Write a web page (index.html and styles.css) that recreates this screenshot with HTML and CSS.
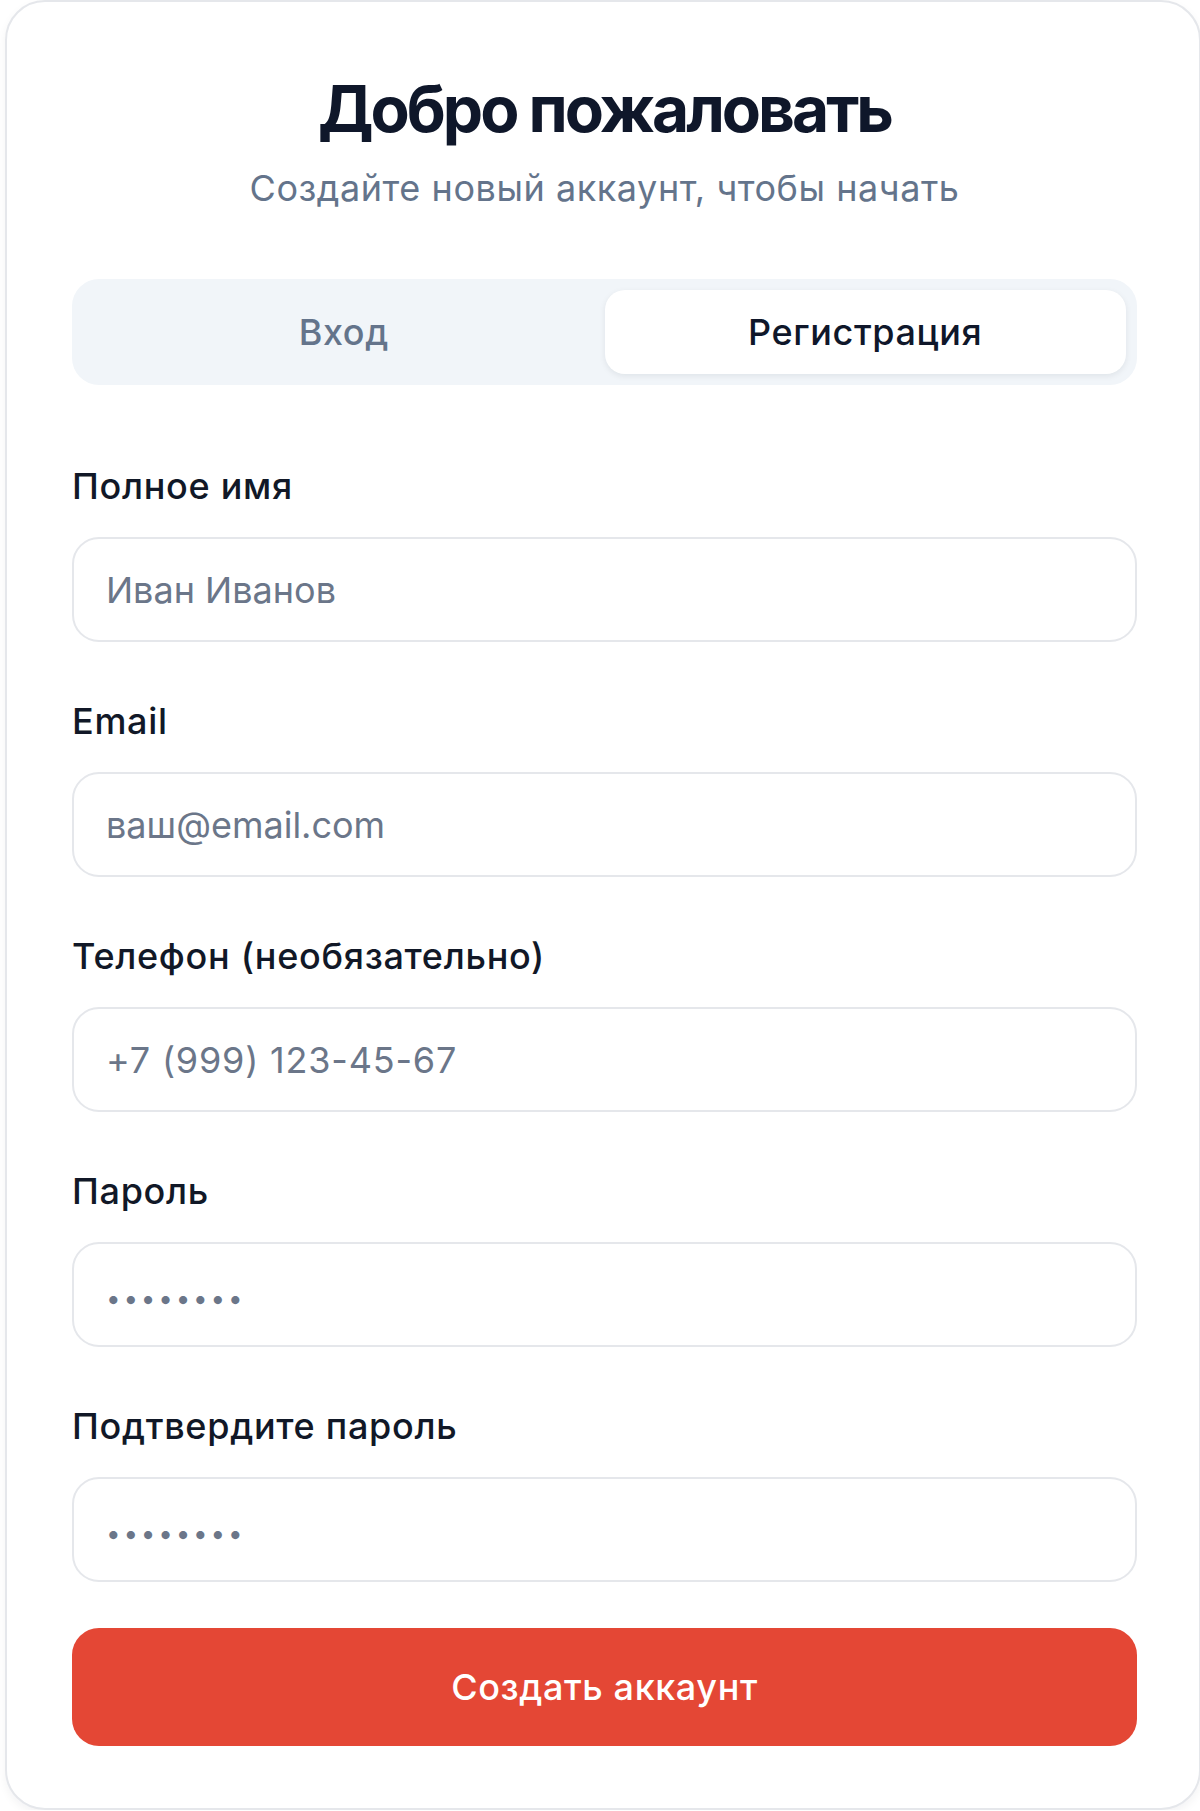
FILE: index.html
```html
<!DOCTYPE html>
<html lang="ru">
<head>
<meta charset="utf-8">
<title>Регистрация</title>
<link rel="stylesheet" href="styles.css">
</head>
<body>
<div class="card">
  <h1 class="title">Добро пожаловать</h1>
  <p class="subtitle">Создайте новый аккаунт, чтобы начать</p>
  <div class="tabs">
    <button class="tab" type="button">Вход</button>
    <button class="tab active" type="button">Регистрация</button>
  </div>
  <form class="form">
    <div class="fields">
      <div class="field">
        <label class="label">Полное имя</label>
        <input class="input" type="text" placeholder="Иван Иванов">
      </div>
      <div class="field">
        <label class="label">Email</label>
        <input class="input" type="email" placeholder="ваш@email.com">
      </div>
      <div class="field">
        <label class="label">Телефон (необязательно)</label>
        <input class="input tel" type="tel" placeholder="+7 (999) 123-45-67">
      </div>
      <div class="field">
        <label class="label">Пароль</label>
        <input class="input pw" type="password" placeholder="••••••••">
      </div>
      <div class="field">
        <label class="label">Подтвердите пароль</label>
        <input class="input pw" type="password" placeholder="••••••••">
      </div>
    </div>
    <button class="submit" type="button">Создать аккаунт</button>
  </form>
</div>
</body>
</html>
```

FILE: styles.css
```css
html, body {
  margin: 0;
  padding: 0;
  background: #ffffff;
}

body {
  font-family: Inter, "Noto Sans", sans-serif;
  color: #0f172a;
}

.card {
  box-sizing: border-box;
  width: 1196px;
  margin-left: 5px;
  border: 2px solid #e5e7eb;
  border-radius: 40px;
  padding: 69px 62px 62px 65px;
  background: #ffffff;
  box-shadow: 0 4px 10px rgba(15, 23, 42, 0.05);
}

.title {
  margin: 0;
  font-size: 64px;
  font-weight: 700;
  line-height: 76px;
  letter-spacing: -3px;
  text-align: center;
  color: #0f172a;
}

.subtitle {
  margin: 14px 0 0;
  font-size: 36px;
  line-height: 54px;
  letter-spacing: 0.55px;
  text-align: center;
  color: #64748b;
}

.tabs {
  margin-top: 64px;
  display: grid;
  grid-template-columns: 1fr 1fr;
  padding: 11px;
  background: #f1f5f9;
  border-radius: 27px;
}

.tab {
  height: 84px;
  border: 0;
  border-radius: 20px;
  background: transparent;
  font-family: Inter, "Noto Sans", sans-serif;
  font-size: 36px;
  font-weight: 500;
  letter-spacing: 0.6px;
  color: #64748b;
  padding: 0;
}

.tab.active {
  background: #ffffff;
  color: #0f172a;
  box-shadow: 0 2px 6px rgba(15, 23, 42, 0.08);
}

.form {
  margin: 77px 0 0;
}

.fields {
  display: flex;
  flex-direction: column;
  gap: 55px;
}

.field {
  display: flex;
  flex-direction: column;
  gap: 27px;
}

.label {
  font-size: 36px;
  font-weight: 500;
  line-height: 48px;
  letter-spacing: 0.7px;
  color: #111827;
}

.input {
  box-sizing: border-box;
  width: 100%;
  height: 105px;
  margin: 0;
  border: 2px solid #e5e7eb;
  border-radius: 27px;
  padding: 0 32px;
  background: #ffffff;
  font-family: Inter, "Noto Sans", sans-serif;
  font-size: 36px;
  color: #0f172a;
  outline: none;
}

.input::placeholder {
  color: #6b7689;
  opacity: 1;
}

.input.tel::placeholder {
  letter-spacing: 0.8px;
}

.input.pw::placeholder {
  font-size: 26px;
  letter-spacing: 2.8px;
}

.submit {
  display: block;
  width: 100%;
  height: 118px;
  margin-top: 46px;
  border: 0;
  border-radius: 27px;
  background: #e44735;
  color: #ffffff;
  font-family: Inter, "Noto Sans", sans-serif;
  font-size: 36px;
  font-weight: 500;
  letter-spacing: 0.6px;
  padding: 0;
}
```
